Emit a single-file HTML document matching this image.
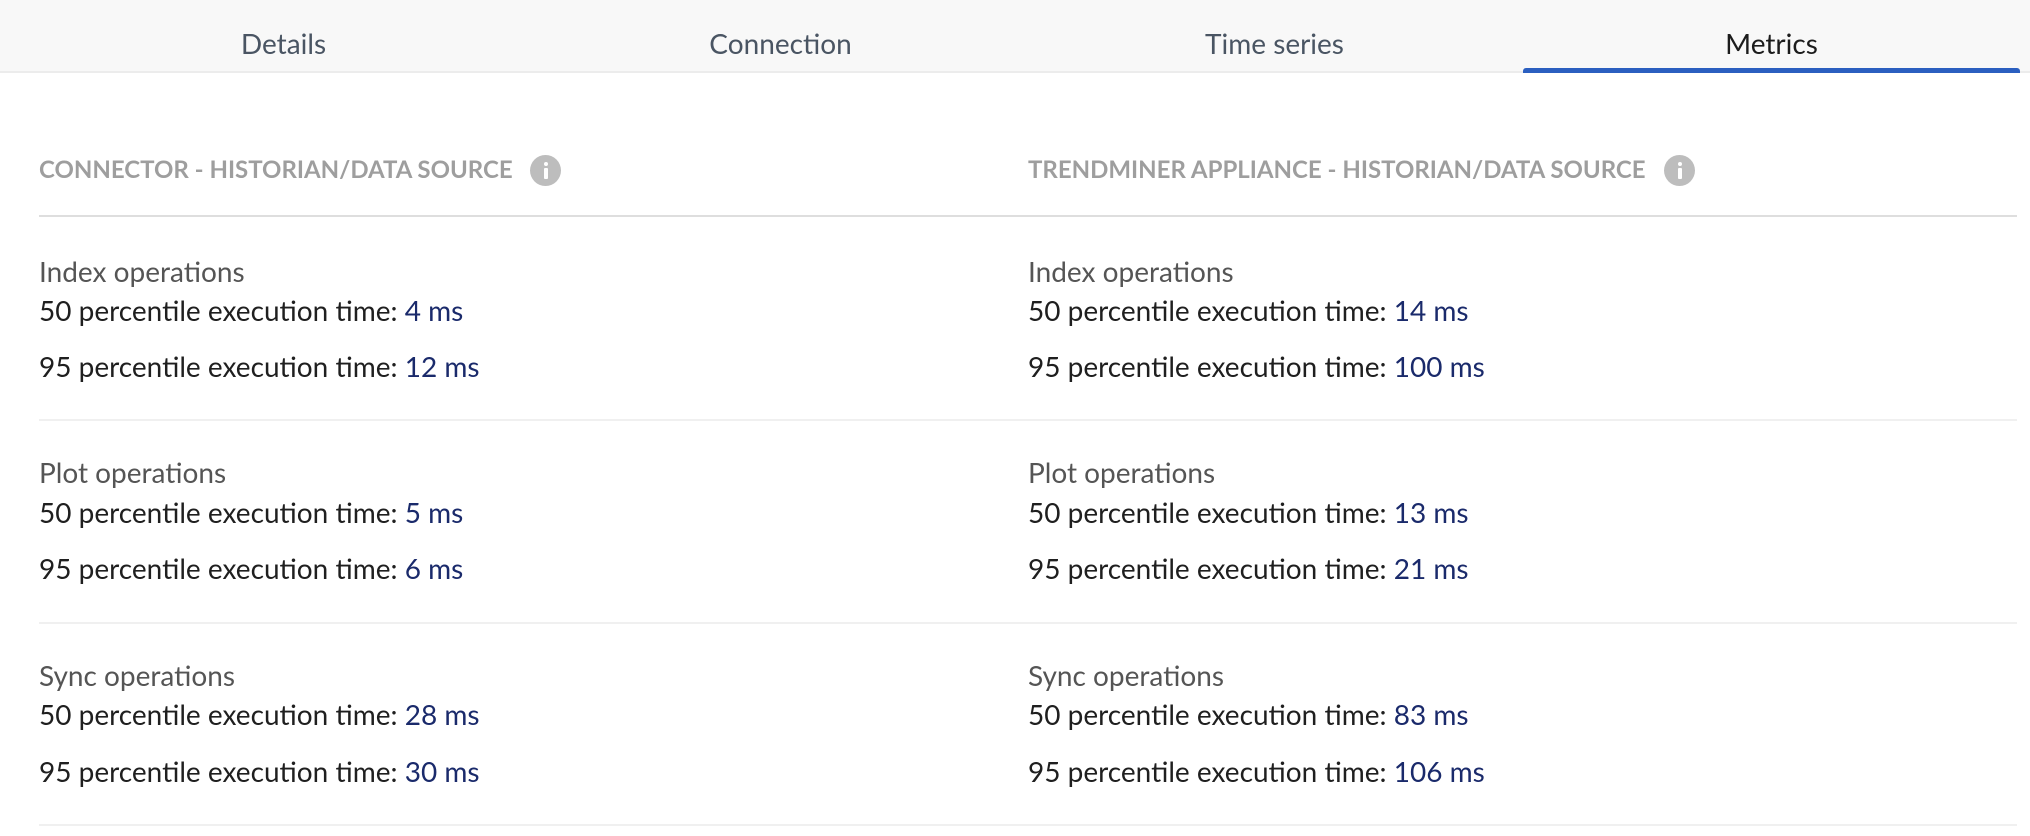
<!DOCTYPE html>
<html><head><meta charset="utf-8"><style>
html,body{margin:0;padding:0;background:#fff;width:2030px;height:836px;overflow:hidden;font-family:"Lato","Liberation Sans",sans-serif;}
.tabs{position:absolute;left:0;top:0;width:2030px;height:71px;background:#f8f8f8;border-bottom:2px solid #ececec;}
.tab{position:absolute;top:0;height:71px;line-height:86px;text-align:center;font-size:28px;color:#4a5563;}
.tab.active{color:#1c1c1c;}
.ul{position:absolute;left:1523px;top:68px;width:497px;height:5px;background:#2b5fc0;border-radius:3px 3px 0 0;}
.t{position:absolute;height:40px;line-height:40px;white-space:nowrap;}
.h{font-size:24px;font-weight:bold;color:#9e9e9e;}
.ti{font-size:28px;color:#555;}
.l{font-size:28px;color:#1f1f1f;}
.v{color:#1a2a6b;}
.info{position:absolute;width:31px;height:31px;border-radius:50%;background:#bdbdbd;}
.info:before{content:"";position:absolute;left:14px;top:7px;width:4px;height:4px;background:#fff;border-radius:50%;}
.info:after{content:"";position:absolute;left:14px;top:13px;width:4px;height:11px;background:#fff;border-radius:1px;}
.hr{position:absolute;height:2px;}
</style></head><body>
<div class="tabs">
<div class="tab" style="left:30px;width:507px">Details</div>
<div class="tab" style="left:527px;width:507px">Connection</div>
<div class="tab" style="left:1021px;width:507px">Time series</div>
<div class="tab active" style="left:1523px;width:497px">Metrics</div>
<div class="ul"></div>
</div>

<div class="t h" style="left:39px;top:150px">CONNECTOR - HISTORIAN/DATA SOURCE</div>
<div class="info" style="left:530px;top:155px"></div>
<div class="t h" style="left:1028px;top:150px">TRENDMINER APPLIANCE - HISTORIAN/DATA SOURCE</div>
<div class="info" style="left:1664px;top:155px"></div>
<div class="hr" style="left:39px;top:215px;width:1978px;background:#dedede"></div>

<div class="t ti" style="left:39px;top:251px">Index operations</div>
<div class="t l" style="left:39px;top:290px">50 percentile execution time: <span class="v">4 ms</span></div>
<div class="t l" style="left:39px;top:346px">95 percentile execution time: <span class="v">12 ms</span></div>
<div class="t ti" style="left:39px;top:452px">Plot operations</div>
<div class="t l" style="left:39px;top:492px">50 percentile execution time: <span class="v">5 ms</span></div>
<div class="t l" style="left:39px;top:548px">95 percentile execution time: <span class="v">6 ms</span></div>
<div class="t ti" style="left:39px;top:655px">Sync operations</div>
<div class="t l" style="left:39px;top:694px">50 percentile execution time: <span class="v">28 ms</span></div>
<div class="t l" style="left:39px;top:751px">95 percentile execution time: <span class="v">30 ms</span></div>

<div class="t ti" style="left:1028px;top:251px">Index operations</div>
<div class="t l" style="left:1028px;top:290px">50 percentile execution time: <span class="v">14 ms</span></div>
<div class="t l" style="left:1028px;top:346px">95 percentile execution time: <span class="v">100 ms</span></div>
<div class="t ti" style="left:1028px;top:452px">Plot operations</div>
<div class="t l" style="left:1028px;top:492px">50 percentile execution time: <span class="v">13 ms</span></div>
<div class="t l" style="left:1028px;top:548px">95 percentile execution time: <span class="v">21 ms</span></div>
<div class="t ti" style="left:1028px;top:655px">Sync operations</div>
<div class="t l" style="left:1028px;top:694px">50 percentile execution time: <span class="v">83 ms</span></div>
<div class="t l" style="left:1028px;top:751px">95 percentile execution time: <span class="v">106 ms</span></div>

<div class="hr" style="left:39px;top:419px;width:1978px;background:#f0f0f0"></div>
<div class="hr" style="left:39px;top:622px;width:1978px;background:#f0f0f0"></div>
<div class="hr" style="left:39px;top:824px;width:1978px;background:#f0f0f0"></div>
</body></html>
